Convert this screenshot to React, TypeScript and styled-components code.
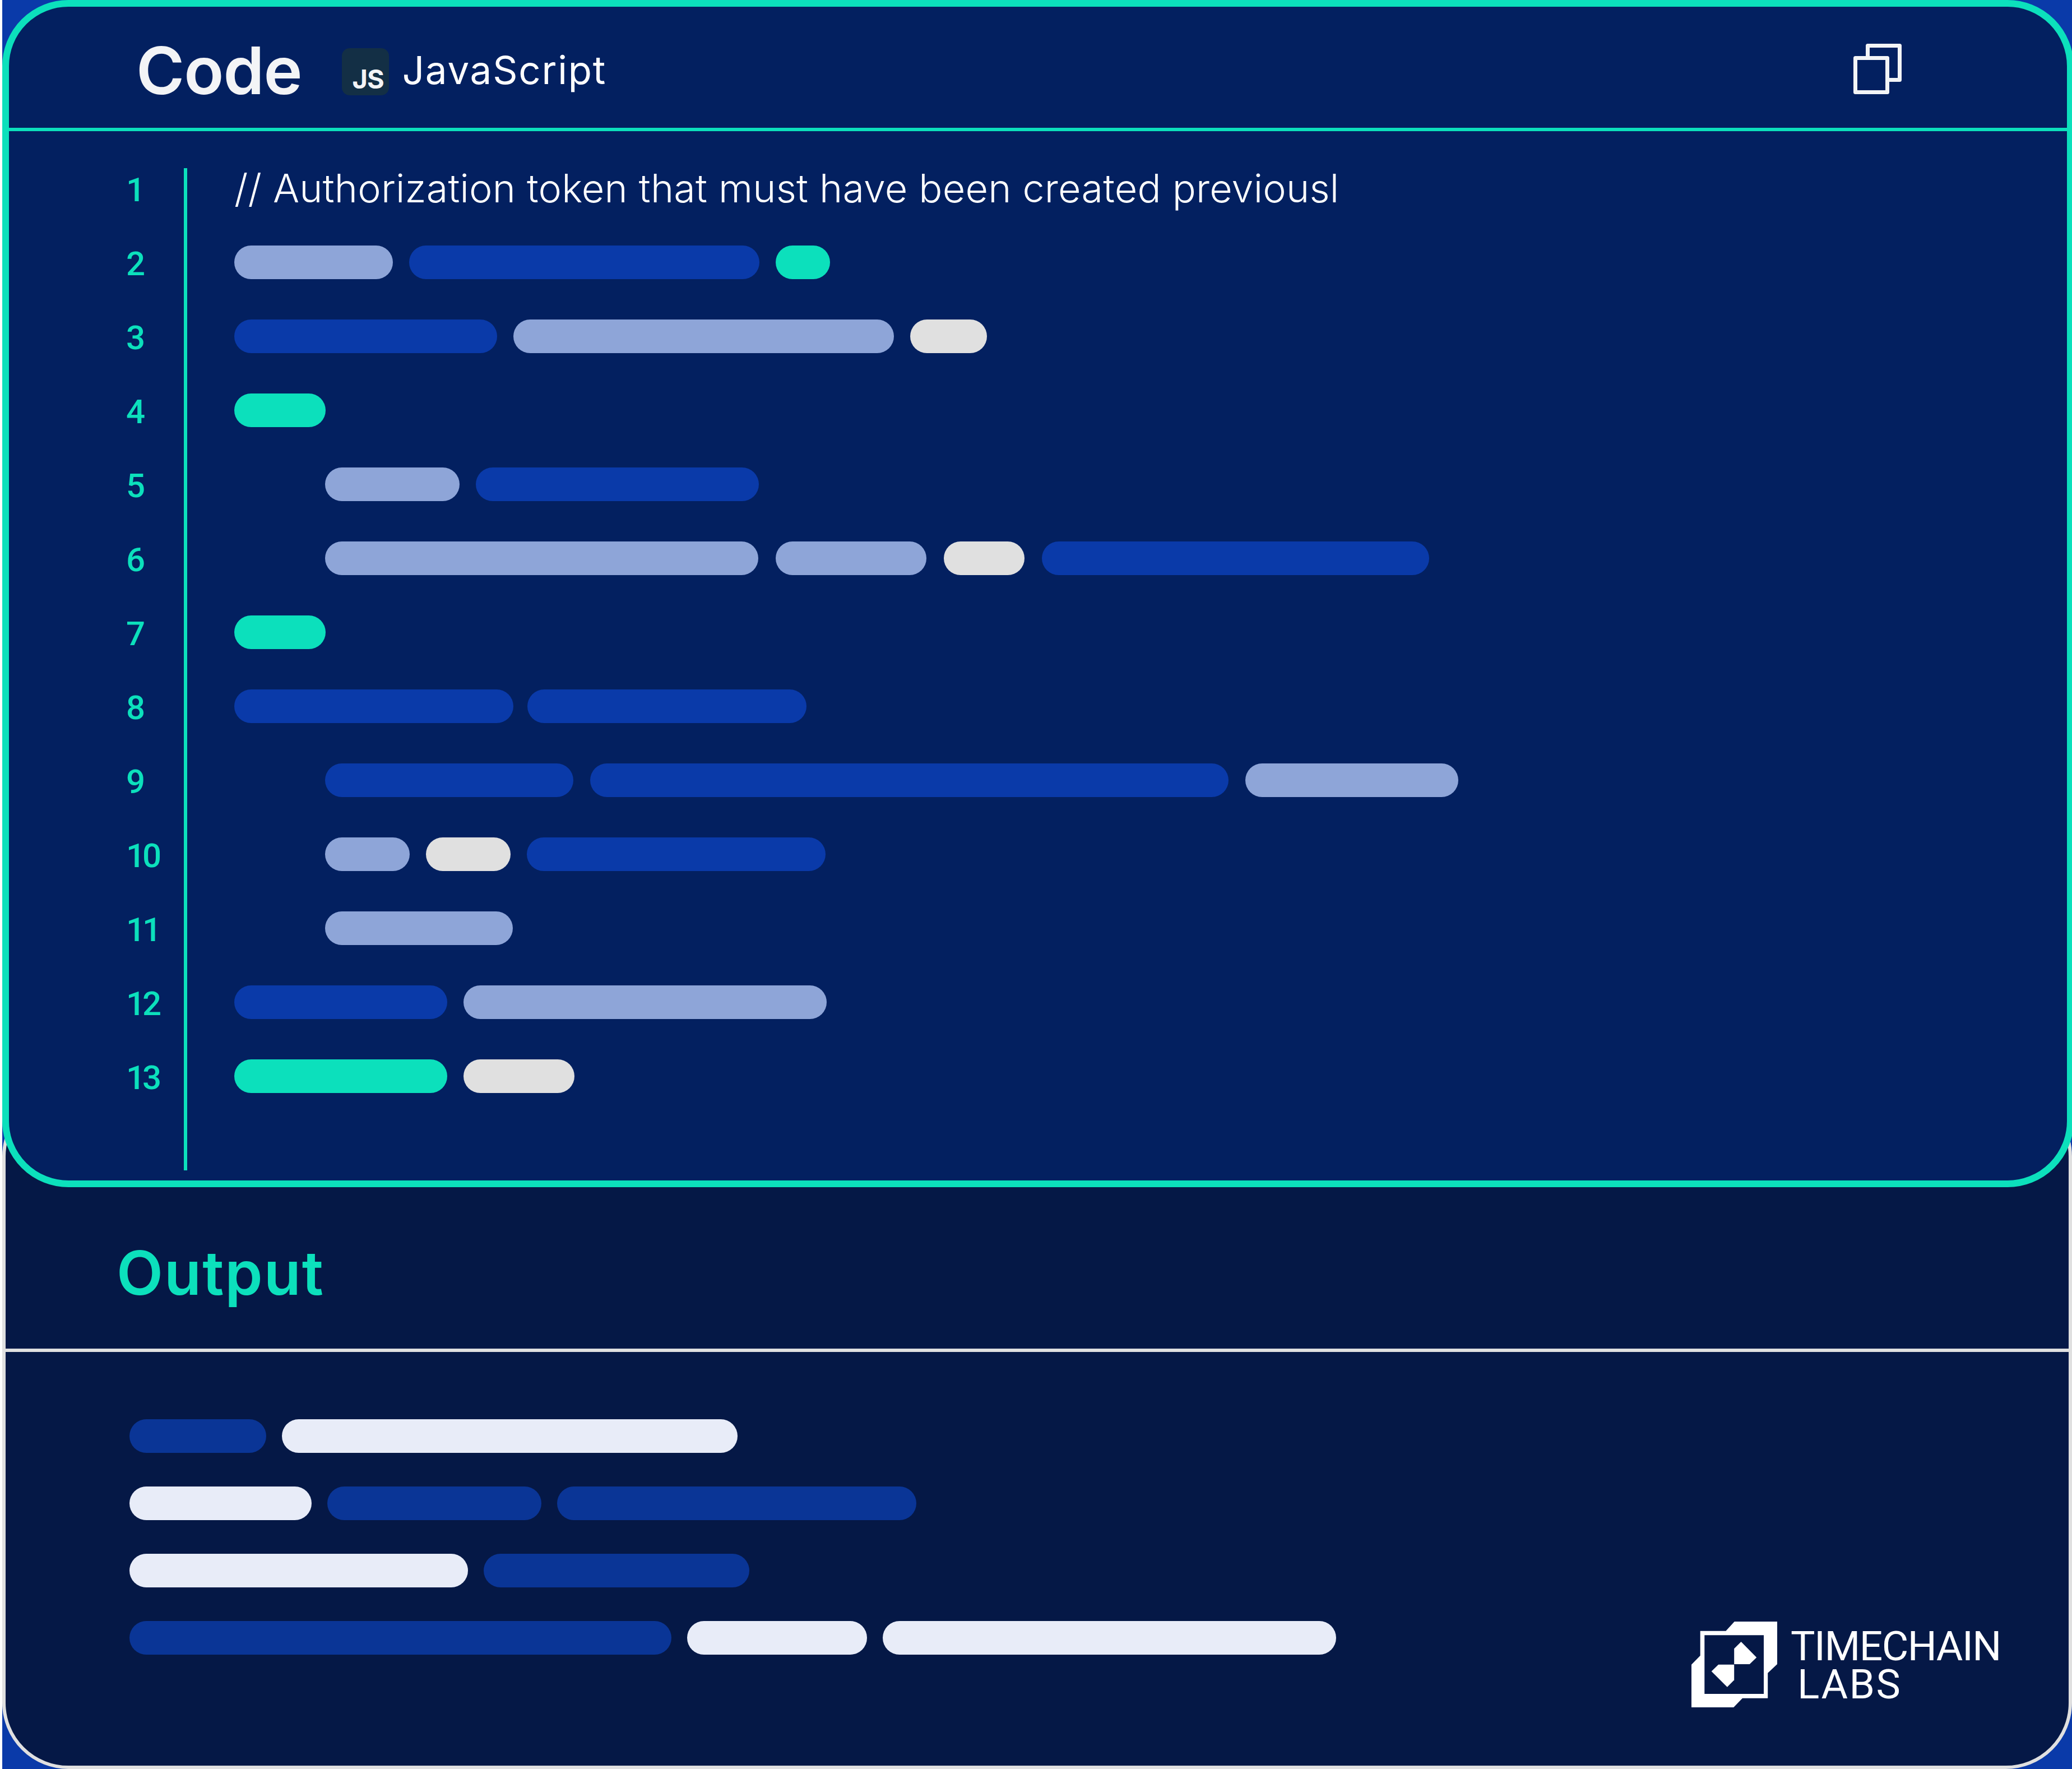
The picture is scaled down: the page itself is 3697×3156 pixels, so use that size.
import React from "react";
import styled, { createGlobalStyle } from "styled-components";

const TEAL = "#0CE0BC";
const tones = {
  blue: "#0A3AA9",
  deep: "#0A3596",
  light: "#8EA5D8",
  teal: TEAL,
  grey: "#E0E0E0",
  pale: "#E8ECF8",
};
type Tone = keyof typeof tones;
type BarSpec = [Tone, number];

const Global = createGlobalStyle`
  html, body { margin: 0; padding: 0; background: #fff; overflow: hidden; }
  #root { width: 3697px; height: 3156px; overflow: hidden; }
  * { box-sizing: border-box; }
`;

const Frame = styled.div`
  width: 3693px;
  height: 3156px;
  margin-left: 4px;
  background: ${tones.blue};
  display: flex;
  flex-direction: column;
  font-family: Inter, "Liberation Sans", sans-serif;
`;

const CodeCard = styled.section`
  position: relative;
  z-index: 1;
  flex: none;
  width: 3696px;
  height: 2118px;
  background: #032060;
  border: 12px solid ${TEAL};
  border-radius: 118px;
  display: flex;
  flex-direction: column;
`;

const CodeHeader = styled.header`
  flex: none;
  height: 222px;
  border-bottom: 6px solid ${TEAL};
  display: flex;
  align-items: center;
  padding: 10px 295px 0 227px;
`;

const CodeTitle = styled.h1`
  margin: 0;
  font-size: 117px;
  line-height: 1;
  font-weight: 600;
  color: #f3f4f6;
  letter-spacing: -1px;
`;

const LangBadge = styled.div`
  width: 84px;
  height: 84px;
  margin: 6px 0 0 71px;
  border-radius: 14px;
  background: #132f45;
  display: flex;
  align-items: flex-end;
  justify-content: flex-end;
  padding: 0 9px 11px 0;
  color: #f3f4f6;
  font-size: 47px;
  line-height: 36px;
  font-weight: 700;
  letter-spacing: -1px;
`;

const LangName = styled.span`
  margin-left: 24px;
  font-size: 69px;
  line-height: 1;
  font-weight: 400;
  color: #ffffff;
  letter-spacing: 1.8px;
`;

const CopyButton = styled.div`
  margin-left: auto;
  width: 86px;
  height: 90px;
  margin-top: -4px;
  color: #f3f4f6;
  svg { display: block; }
`;

const CodeBody = styled.div`
  display: flex;
  align-items: flex-start;
  padding: 66px 0 0 0;
`;

const Gutter = styled.div`
  flex: none;
  width: 312px;
  padding: 9px 0 0 209px;
  display: flex;
  flex-direction: column;
  gap: 72px;
`;

const LineNo = styled.span`
  display: block;
  height: 60px;
  font-family: Roboto, Inter, sans-serif;
  font-size: 60px;
  line-height: 60px;
  font-weight: 500;
  color: ${TEAL};
  letter-spacing: -5px;
`;

const Lines = styled.div`
  flex: 1;
  border-left: 6px solid ${TEAL};
  padding: 6px 0 138px 84px;
  display: flex;
  flex-direction: column;
  gap: 72px;
`;

const Comment = styled.div`
  height: 60px;
  font-size: 70px;
  line-height: 60px;
  font-weight: 300;
  color: #ffffff;
  white-space: nowrap;
  letter-spacing: 0.2px;
`;

const BarRow = styled.div<{ $indent?: boolean; $gap?: number }>`
  height: 60px;
  display: flex;
  gap: ${(p) => p.$gap ?? 29}px;
  padding-left: ${(p) => (p.$indent ? "162px" : "0")};
`;

const Bar = styled.span<{ $tone: Tone; $w: number }>`
  flex: none;
  height: 60px;
  width: ${(p) => p.$w}px;
  border-radius: 30px;
  background: ${(p) => tones[p.$tone]};
`;

const OutputCard = styled.section`
  position: relative;
  flex: none;
  width: 3693px;
  height: 1211px;
  margin-top: -173px;
  background: #051846;
  border: 6px solid ${tones.grey};
  border-radius: 118px;
  display: flex;
  flex-direction: column;
`;

const OutputHeader = styled.header`
  flex: none;
  height: 461px;
  padding: 185px 0 0 198px;
  border-bottom: 6px solid ${tones.grey};
  display: flex;
  align-items: center;
`;

const OutputTitle = styled.h2`
  margin: 0;
  font-size: 108px;
  line-height: 1;
  font-weight: 600;
  color: ${TEAL};
  letter-spacing: 2px;
`;

const OutputBody = styled.div`
  flex: 1;
  padding: 120px 0 0 221px;
  display: flex;
  flex-direction: column;
  gap: 60px;
`;

const LogoBox = styled.div`
  position: absolute;
  left: 3008px;
  top: 942px;
  display: flex;
  gap: 24px;
  color: #fff;
  svg { display: block; flex: none; }
`;

const LogoWords = styled.div`
  display: flex;
  flex-direction: column;
  margin-top: 10px;
  font-family: Roboto, "Liberation Sans", sans-serif;
  font-size: 73px;
  line-height: 68px;
  font-weight: 400;
`;

const LogoLine = styled.span<{ $second?: boolean }>`
  display: block;
  padding-left: ${(p) => (p.$second ? "12px" : "0")};
  letter-spacing: ${(p) => (p.$second ? "2.5px" : "-1.5px")};
`;

const codeRows: { indent?: boolean; gap?: number; bars: BarSpec[] }[] = [
  { bars: [["light", 283], ["blue", 625], ["teal", 97]] },
  { bars: [["blue", 469], ["light", 679], ["grey", 137]] },
  { bars: [["teal", 163]] },
  { indent: true, bars: [["light", 240], ["blue", 505]] },
  { indent: true, gap: 31, bars: [["light", 773], ["light", 269], ["grey", 144], ["blue", 691]] },
  { bars: [["teal", 163]] },
  { gap: 25, bars: [["blue", 498], ["blue", 498]] },
  { indent: true, gap: 30, bars: [["blue", 443], ["blue", 1139], ["light", 380]] },
  { indent: true, gap: 29, bars: [["light", 151], ["grey", 151], ["blue", 533]] },
  { indent: true, bars: [["light", 335]] },
  { bars: [["blue", 380], ["light", 648]] },
  { bars: [["teal", 380], ["grey", 198]] },
];

const outputRows: BarSpec[][] = [
  [["deep", 244], ["pale", 813]],
  [["pale", 325], ["deep", 382], ["deep", 641]],
  [["pale", 604], ["deep", 474]],
  [["deep", 967], ["pale", 321], ["pale", 809]],
];

const CopyIcon = () => (
  <svg width="86" height="90" viewBox="0 0 86 90" fill="none" stroke="currentColor" strokeWidth="7" strokeLinejoin="round">
    <path d="M25.5 22V3.5H82.5V64.5H64" />
    <rect x="3.5" y="25.5" width="57" height="61" />
  </svg>
);

const LogoMark = () => (
  <svg width="153" height="153" viewBox="0 0 153 153" fill="#fff">
    <path
      fillRule="evenodd"
      d="M76.7 0H153V76L136.2 91.7V136.7H91L75.2 153H0V76.7L15.7 60.7V16.7H61.4ZM23.3 24.3V129H129V24.3Z"
    />
    <polygon points="88.6,36 116.2,64 103.8,76 76.2,76 76.2,48.3" />
    <polygon points="63.8,116.7 35.7,88.7 48.1,76.7 76.2,76.7 76.2,104.3" />
  </svg>
);

export default function App() {
  return (
    <>
      <Global />
      <Frame>
        <CodeCard>
          <CodeHeader>
            <CodeTitle>Code</CodeTitle>
            <LangBadge>JS</LangBadge>
            <LangName>JavaScript</LangName>
            <CopyButton>
              <CopyIcon />
            </CopyButton>
          </CodeHeader>
          <CodeBody>
            <Gutter>
              {Array.from({ length: 13 }, (_, i) => (
                <LineNo key={i}>{i + 1}</LineNo>
              ))}
            </Gutter>
            <Lines>
              <Comment>// Authorization token that must have been created previousl</Comment>
              {codeRows.map((row, i) => (
                <BarRow key={i} $indent={row.indent} $gap={row.gap}>
                  {row.bars.map(([tone, w], j) => (
                    <Bar key={j} $tone={tone} $w={w} />
                  ))}
                </BarRow>
              ))}
            </Lines>
          </CodeBody>
        </CodeCard>
        <OutputCard>
          <OutputHeader>
            <OutputTitle>Output</OutputTitle>
          </OutputHeader>
          <OutputBody>
            {outputRows.map((row, i) => (
              <BarRow key={i} $gap={28}>
                {row.map(([tone, w], j) => (
                  <Bar key={j} $tone={tone} $w={w} />
                ))}
              </BarRow>
            ))}
          </OutputBody>
          <LogoBox>
            <LogoMark />
            <LogoWords>
              <LogoLine>TIMECHAIN</LogoLine>
              <LogoLine $second>LABS</LogoLine>
            </LogoWords>
          </LogoBox>
        </OutputCard>
      </Frame>
    </>
  );
}
